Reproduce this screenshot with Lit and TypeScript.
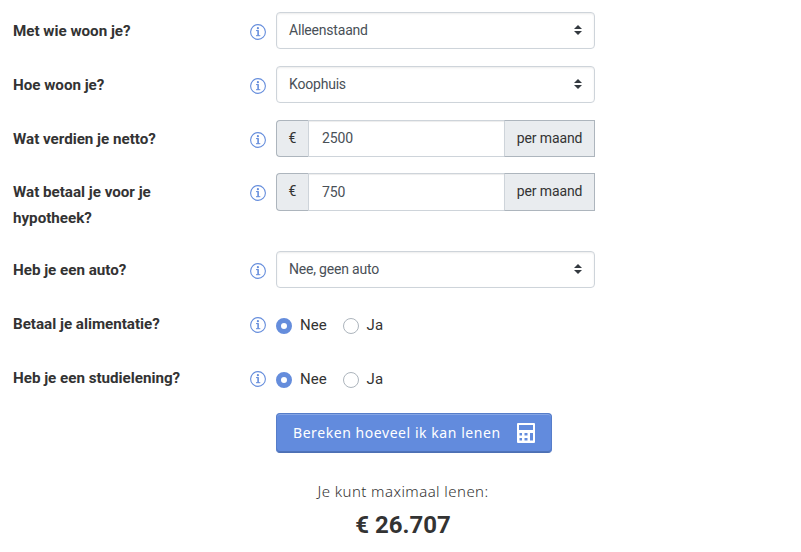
import { LitElement, html, css } from "lit";
import { customElement } from "lit/decorators.js";

type Row = {
  label: string;
  kind: "select" | "amount" | "radio";
  value?: string;
  size?: string;
};

const rows: Row[] = [
  { label: "Met wie woon je?", kind: "select", value: "Alleenstaand" },
  { label: "Hoe woon je?", kind: "select", value: "Koophuis" },
  { label: "Wat verdien je netto?", kind: "amount", value: "2500", size: "snug" },
  { label: "Wat betaal je voor je hypotheek?", kind: "amount", value: "750", size: "tall" },
  { label: "Heb je een auto?", kind: "select", value: "Nee, geen auto" },
  { label: "Betaal je alimentatie?", kind: "radio" },
  { label: "Heb je een studielening?", kind: "radio" },
];

@customElement("app-root")
export class AppRoot extends LitElement {
  static styles = css`
    :host {
      display: block;
      box-sizing: border-box;
      height: 552px;
      padding: 12px 0 0 13px;
      overflow: hidden;
      background: #fff;
      color: #333;
      font-family: Roboto, "Liberation Sans", sans-serif;
    }
    * { box-sizing: border-box; }
    .row {
      display: grid;
      grid-template-columns: 237px 26px 319px;
      align-items: start;
      height: 54px;
    }
    .row.snug { height: 53px; }
    .row.tall { height: 78px; }
    .label {
      width: 190px;
      padding-top: 6px;
      font-size: 15.2px;
      line-height: 26px;
      font-weight: 700;
      letter-spacing: -0.02px;
    }
    .info { display: block; margin-top: 12px; }
    .select, .group {
      display: flex;
      align-items: center;
      height: 37px;
      font-size: 14px;
      line-height: 21px;
      color: #495057;
    }
    .tall .group { height: 38px; }
    .tall .addon { padding-bottom: 1px; }
    .select {
      justify-content: space-between;
      padding: 0 12px;
      border: 1px solid #ced4da;
      border-radius: 4px;
      box-shadow: inset 0 1px 2px rgba(0, 0, 0, 0.075);
      letter-spacing: -0.2px;
    }
    .arrows { display: block; margin-bottom: 1px; }
    .group { align-items: stretch; }
    .addon {
      display: flex;
      align-items: center;
      justify-content: center;
      background: #e9ecef;
      border: 1px solid #adb5bd;
      color: #333;
      letter-spacing: -0.1px;
    }
    .euro { width: 33px; border-radius: 4px 0 0 4px; border-right-color: #ced4da; }
    .unit { width: 91px; border-left-color: #ced4da; }
    .amount {
      flex: 1;
      display: flex;
      align-items: center;
      padding-left: 13px;
      border: solid #ced4da;
      border-width: 1px 0;
      box-shadow: inset 0 1px 1px rgba(0, 0, 0, 0.075);
      letter-spacing: -0.15px;
    }
    .options {
      display: flex;
      align-items: center;
      height: 26px;
      margin-top: 7px;
      font-size: 15px;
    }
    .option { display: flex; align-items: center; margin-right: 16px; }
    .dot {
      width: 16px;
      height: 16px;
      margin: 2px 8px 0 0;
      border: 1px solid #adb5bd;
      border-radius: 50%;
    }
    .dot.on { border: 5px solid #658ddc; }
    .button {
      display: flex;
      align-items: center;
      justify-content: space-between;
      width: 276px;
      height: 40px;
      margin-left: 263px;
      padding: 0 16px;
      border: 1px solid #567dc9;
      border-bottom-color: #4d70b4;
      border-radius: 4px;
      background: #628bdd;
      box-shadow: inset 0 1px 0 #85a5e5, inset 0 -1px 0 #5074ba;
      color: #fff;
      font: 400 14px/20px "Noto Sans", sans-serif;
      letter-spacing: 0.56px;
      white-space: nowrap;
    }
    .calc { display: block; margin-top: -1px; }
    .result { width: 254px; margin-left: 263px; text-align: center; }
    .caption {
      margin-top: 27px;
      font: 300 15px/22px "Noto Sans", sans-serif;
      letter-spacing: 0.43px;
    }
    .total { margin-top: 8px; font-size: 24px; line-height: 30px; font-weight: 700; }
  `;

  private info() {
    return html`<svg class="info" width="16" height="16" viewBox="0 0 16 16" fill="none" stroke="#658ddc">
      <circle cx="8" cy="8" r="7.4" stroke-width="1.1" />
      <circle cx="7.9" cy="4.2" r="1.1" fill="#658ddc" stroke="none" />
      <path d="M6 6.6h2.400" stroke-width="1" />
      <path d="M8.100 6.200v5.600" stroke-width="1.6" />
      <path d="M6 11.700h4.300" stroke-width="1" />
    </svg>`;
  }

  private control(row: Row) {
    if (row.kind === "select") {
      return html`<div class="select" role="combobox">
        <span>${row.value}</span>
        <svg class="arrows" width="8" height="10" viewBox="0 0 4 5"><path fill="#343a40" d="M2 0L0 2h4zm0 5L0 3h4z" /></svg>
      </div>`;
    }
    if (row.kind === "amount") {
      return html`<div class="group">
        <span class="addon euro">€</span><span class="amount">${row.value}</span><span class="addon unit">per maand</span>
      </div>`;
    }
    return html`<div class="options">
      <span class="option"><span class="dot on"></span>Nee</span>
      <span class="option"><span class="dot"></span>Ja</span>
    </div>`;
  }

  render() {
    return html`
      ${rows.map(
        (row) => html`<div class="row ${row.size ?? ""}">
          <div class="label">${row.label}</div>
          ${this.info()} ${this.control(row)}
        </div>`
      )}
      <div class="button" role="button">
        <span>Bereken hoeveel ik kan lenen</span>
        <svg class="calc" width="18" height="20" viewBox="0 0 18 20">
          <path fill="#fff" fill-rule="evenodd" d="M1 0h16a1 1 0 0 1 1 1v18a1 1 0 0 1-1 1H1a1 1 0 0 1-1-1V1a1 1 0 0 1 1-1zM2 2v5h14V2zM2.500 10v2.500h2.500v-2.500zm5 0v2.500h3v-2.500zm5.500 0v7.500H16v-7.500zM2.500 15v2.500h2.500v-2.500zm5 0v2.500h3v-2.500z" />
        </svg>
      </div>
      <div class="result">
        <div class="caption">Je kunt maximaal lenen:</div>
        <div class="total">€ 26.707</div>
      </div>
    `;
  }
}
